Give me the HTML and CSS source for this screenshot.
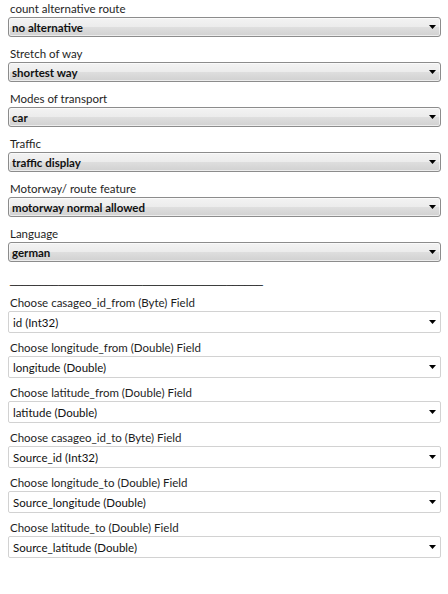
FILE: index.html
```html
<!DOCTYPE html>
<html>
<head>
<meta charset="utf-8">
<link rel="stylesheet" href="styles.css">
</head>
<body>
<div class="form">
  <div class="field">
    <div class="label">count alternative route</div>
    <div class="combo"><span>no alternative</span><svg class="arrow" width="7" height="4" viewBox="0 0 7 4"><path d="M0 0H7L3.5 4Z"/></svg></div>
  </div>
  <div class="field">
    <div class="label">Stretch of way</div>
    <div class="combo"><span>shortest way</span><svg class="arrow" width="7" height="4" viewBox="0 0 7 4"><path d="M0 0H7L3.5 4Z"/></svg></div>
  </div>
  <div class="field">
    <div class="label">Modes of transport</div>
    <div class="combo"><span>car</span><svg class="arrow" width="7" height="4" viewBox="0 0 7 4"><path d="M0 0H7L3.5 4Z"/></svg></div>
  </div>
  <div class="field">
    <div class="label">Traffic</div>
    <div class="combo"><span>traffic display</span><svg class="arrow" width="7" height="4" viewBox="0 0 7 4"><path d="M0 0H7L3.5 4Z"/></svg></div>
  </div>
  <div class="field">
    <div class="label">Motorway/ route feature</div>
    <div class="combo"><span>motorway normal allowed</span><svg class="arrow" width="7" height="4" viewBox="0 0 7 4"><path d="M0 0H7L3.5 4Z"/></svg></div>
  </div>
  <div class="field">
    <div class="label">Language</div>
    <div class="combo"><span>german</span><svg class="arrow" width="7" height="4" viewBox="0 0 7 4"><path d="M0 0H7L3.5 4Z"/></svg></div>
  </div>

  <div class="separator">__________________________________________</div>

  <div class="field field2">
    <div class="label">Choose casageo_id_from (Byte) Field</div>
    <div class="plain"><span>id (Int32)</span><svg class="arrow" width="7" height="4" viewBox="0 0 7 4"><path d="M0 0H7L3.5 4Z"/></svg></div>
  </div>
  <div class="field field2">
    <div class="label">Choose longitude_from (Double) Field</div>
    <div class="plain"><span>longitude (Double)</span><svg class="arrow" width="7" height="4" viewBox="0 0 7 4"><path d="M0 0H7L3.5 4Z"/></svg></div>
  </div>
  <div class="field field2">
    <div class="label">Choose latitude_from (Double) Field</div>
    <div class="plain"><span>latitude (Double)</span><svg class="arrow" width="7" height="4" viewBox="0 0 7 4"><path d="M0 0H7L3.5 4Z"/></svg></div>
  </div>
  <div class="field field2">
    <div class="label">Choose casageo_id_to (Byte) Field</div>
    <div class="plain"><span>Source_id (Int32)</span><svg class="arrow" width="7" height="4" viewBox="0 0 7 4"><path d="M0 0H7L3.5 4Z"/></svg></div>
  </div>
  <div class="field field2">
    <div class="label">Choose longitude_to (Double) Field</div>
    <div class="plain"><span>Source_longitude (Double)</span><svg class="arrow" width="7" height="4" viewBox="0 0 7 4"><path d="M0 0H7L3.5 4Z"/></svg></div>
  </div>
  <div class="field field2">
    <div class="label">Choose latitude_to (Double) Field</div>
    <div class="plain"><span>Source_latitude (Double)</span><svg class="arrow" width="7" height="4" viewBox="0 0 7 4"><path d="M0 0H7L3.5 4Z"/></svg></div>
  </div>
</div>
</body>
</html>
```

FILE: styles.css
```css
html, body {
  background: #ffffff;
}
body {
  margin: 0 7px 0 8px;
  font-family: "Lato", "Liberation Sans", sans-serif;
  font-size: 11.5px;
  color: #1e1e1e;
}
.form {
  display: flex;
  flex-direction: column;
}
.field {
  display: flex;
  flex-direction: column;
  margin-bottom: 8px;
}
.label {
  height: 17px;
  line-height: 17px;
  padding-left: 2px;
  white-space: nowrap;
}
.combo {
  height: 20px;
  box-sizing: border-box;
  border: 1px solid #8c8c8c;
  border-radius: 3px;
  background: linear-gradient(#f3f3f3 0%, #ececec 48%, #dedede 52%, #d1d1d1 100%);
  box-shadow: inset 0 0 0 1px rgba(255,255,255,0.6);
  display: flex;
  align-items: center;
  justify-content: space-between;
  padding: 0 4px 0 3px;
  font-weight: bold;
  color: #111;
}
.arrow {
  display: block;
  fill: #000;
  flex: none;
}
.separator {
  height: 24px;
  margin-top: -8px;
  padding-top: 8px;
  line-height: 20px;
  padding-left: 2px;
  white-space: nowrap;
  overflow: hidden;
  font-family: "Liberation Sans", sans-serif;
  font-size: 11px;
  color: #000;
  letter-spacing: -0.1px;
}
.field2 {
  margin-bottom: 6px;
}
.plain {
  height: 22px;
  box-sizing: border-box;
  border: 1px solid #d2d2d2;
  border-radius: 2px;
  background: #fff;
  display: flex;
  align-items: center;
  justify-content: space-between;
  padding: 0 4px 0 4px;
  color: #111;
}
```
